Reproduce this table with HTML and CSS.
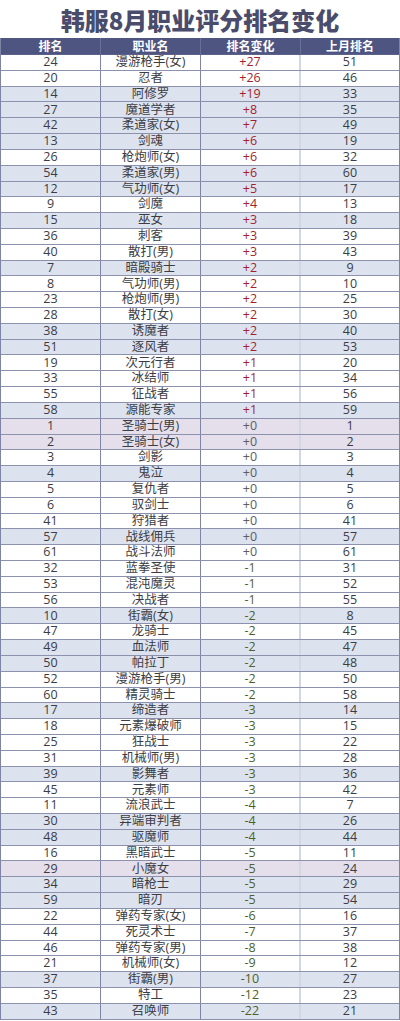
FILE: index.html
```html
<!DOCTYPE html>
<html lang="zh-CN">
<head>
<meta charset="utf-8">
<title>韩服8月职业评分排名变化</title>
<link rel="stylesheet" href="styles.css">
</head>
<body>
<div class="page">
  <h1 class="title">韩服8月职业评分排名变化</h1>
  <div class="table">
    <div class="row head"><div class="c">排名</div><div class="c">职业名</div><div class="c">排名变化</div><div class="c">上月排名</div></div>
    <div class="row w"><div class="c">24</div><div class="c">漫游枪手(女)</div><div class="c up">+27</div><div class="c">51</div></div>
    <div class="row w"><div class="c">20</div><div class="c">忍者</div><div class="c up">+26</div><div class="c">46</div></div>
    <div class="row b"><div class="c">14</div><div class="c">阿修罗</div><div class="c up">+19</div><div class="c">33</div></div>
    <div class="row b"><div class="c">27</div><div class="c">魔道学者</div><div class="c up">+8</div><div class="c">35</div></div>
    <div class="row b"><div class="c">42</div><div class="c">柔道家(女)</div><div class="c up">+7</div><div class="c">49</div></div>
    <div class="row b"><div class="c">13</div><div class="c">剑魂</div><div class="c up">+6</div><div class="c">19</div></div>
    <div class="row w"><div class="c">26</div><div class="c">枪炮师(女)</div><div class="c up">+6</div><div class="c">32</div></div>
    <div class="row b"><div class="c">54</div><div class="c">柔道家(男)</div><div class="c up">+6</div><div class="c">60</div></div>
    <div class="row b"><div class="c">12</div><div class="c">气功师(女)</div><div class="c up">+5</div><div class="c">17</div></div>
    <div class="row w"><div class="c">9</div><div class="c">剑魔</div><div class="c up">+4</div><div class="c">13</div></div>
    <div class="row b"><div class="c">15</div><div class="c">巫女</div><div class="c up">+3</div><div class="c">18</div></div>
    <div class="row w"><div class="c">36</div><div class="c">刺客</div><div class="c up">+3</div><div class="c">39</div></div>
    <div class="row w"><div class="c">40</div><div class="c">散打(男)</div><div class="c up">+3</div><div class="c">43</div></div>
    <div class="row b"><div class="c">7</div><div class="c">暗殿骑士</div><div class="c up">+2</div><div class="c">9</div></div>
    <div class="row w"><div class="c">8</div><div class="c">气功师(男)</div><div class="c up">+2</div><div class="c">10</div></div>
    <div class="row w"><div class="c">23</div><div class="c">枪炮师(男)</div><div class="c up">+2</div><div class="c">25</div></div>
    <div class="row w"><div class="c">28</div><div class="c">散打(女)</div><div class="c up">+2</div><div class="c">30</div></div>
    <div class="row b"><div class="c">38</div><div class="c">诱魔者</div><div class="c up">+2</div><div class="c">40</div></div>
    <div class="row b"><div class="c">51</div><div class="c">逐风者</div><div class="c up">+2</div><div class="c">53</div></div>
    <div class="row w"><div class="c">19</div><div class="c">次元行者</div><div class="c up">+1</div><div class="c">20</div></div>
    <div class="row w"><div class="c">33</div><div class="c">冰结师</div><div class="c up">+1</div><div class="c">34</div></div>
    <div class="row w"><div class="c">55</div><div class="c">征战者</div><div class="c up">+1</div><div class="c">56</div></div>
    <div class="row b"><div class="c">58</div><div class="c">源能专家</div><div class="c up">+1</div><div class="c">59</div></div>
    <div class="row p"><div class="c">1</div><div class="c">圣骑士(男)</div><div class="c zero">+0</div><div class="c">1</div></div>
    <div class="row p"><div class="c">2</div><div class="c">圣骑士(女)</div><div class="c zero">+0</div><div class="c">2</div></div>
    <div class="row w"><div class="c">3</div><div class="c">剑影</div><div class="c zero">+0</div><div class="c">3</div></div>
    <div class="row b"><div class="c">4</div><div class="c">鬼泣</div><div class="c zero">+0</div><div class="c">4</div></div>
    <div class="row w"><div class="c">5</div><div class="c">复仇者</div><div class="c zero">+0</div><div class="c">5</div></div>
    <div class="row w"><div class="c">6</div><div class="c">驭剑士</div><div class="c zero">+0</div><div class="c">6</div></div>
    <div class="row w"><div class="c">41</div><div class="c">狩猎者</div><div class="c zero">+0</div><div class="c">41</div></div>
    <div class="row b"><div class="c">57</div><div class="c">战线佣兵</div><div class="c zero">+0</div><div class="c">57</div></div>
    <div class="row w"><div class="c">61</div><div class="c">战斗法师</div><div class="c zero">+0</div><div class="c">61</div></div>
    <div class="row w"><div class="c">32</div><div class="c">蓝拳圣使</div><div class="c down">-1</div><div class="c">31</div></div>
    <div class="row w"><div class="c">53</div><div class="c">混沌魔灵</div><div class="c down">-1</div><div class="c">52</div></div>
    <div class="row w"><div class="c">56</div><div class="c">决战者</div><div class="c down">-1</div><div class="c">55</div></div>
    <div class="row b"><div class="c">10</div><div class="c">街霸(女)</div><div class="c down">-2</div><div class="c">8</div></div>
    <div class="row w"><div class="c">47</div><div class="c">龙骑士</div><div class="c down">-2</div><div class="c">45</div></div>
    <div class="row b"><div class="c">49</div><div class="c">血法师</div><div class="c down">-2</div><div class="c">47</div></div>
    <div class="row b"><div class="c">50</div><div class="c">帕拉丁</div><div class="c down">-2</div><div class="c">48</div></div>
    <div class="row w"><div class="c">52</div><div class="c">漫游枪手(男)</div><div class="c down">-2</div><div class="c">50</div></div>
    <div class="row w"><div class="c">60</div><div class="c">精灵骑士</div><div class="c down">-2</div><div class="c">58</div></div>
    <div class="row b"><div class="c">17</div><div class="c">缔造者</div><div class="c down">-3</div><div class="c">14</div></div>
    <div class="row w"><div class="c">18</div><div class="c">元素爆破师</div><div class="c down">-3</div><div class="c">15</div></div>
    <div class="row w"><div class="c">25</div><div class="c">狂战士</div><div class="c down">-3</div><div class="c">22</div></div>
    <div class="row w"><div class="c">31</div><div class="c">机械师(男)</div><div class="c down">-3</div><div class="c">28</div></div>
    <div class="row b"><div class="c">39</div><div class="c">影舞者</div><div class="c down">-3</div><div class="c">36</div></div>
    <div class="row w"><div class="c">45</div><div class="c">元素师</div><div class="c down">-3</div><div class="c">42</div></div>
    <div class="row w"><div class="c">11</div><div class="c">流浪武士</div><div class="c down">-4</div><div class="c">7</div></div>
    <div class="row b"><div class="c">30</div><div class="c">异端审判者</div><div class="c down">-4</div><div class="c">26</div></div>
    <div class="row b"><div class="c">48</div><div class="c">驱魔师</div><div class="c down">-4</div><div class="c">44</div></div>
    <div class="row w"><div class="c">16</div><div class="c">黑暗武士</div><div class="c down">-5</div><div class="c">11</div></div>
    <div class="row p"><div class="c">29</div><div class="c">小魔女</div><div class="c down">-5</div><div class="c">24</div></div>
    <div class="row b"><div class="c">34</div><div class="c">暗枪士</div><div class="c down">-5</div><div class="c">29</div></div>
    <div class="row b"><div class="c">59</div><div class="c">暗刃</div><div class="c down">-5</div><div class="c">54</div></div>
    <div class="row w"><div class="c">22</div><div class="c">弹药专家(女)</div><div class="c down">-6</div><div class="c">16</div></div>
    <div class="row w"><div class="c">44</div><div class="c">死灵术士</div><div class="c down">-7</div><div class="c">37</div></div>
    <div class="row w"><div class="c">46</div><div class="c">弹药专家(男)</div><div class="c down">-8</div><div class="c">38</div></div>
    <div class="row w"><div class="c">21</div><div class="c">机械师(女)</div><div class="c down">-9</div><div class="c">12</div></div>
    <div class="row b"><div class="c">37</div><div class="c">街霸(男)</div><div class="c down">-10</div><div class="c">27</div></div>
    <div class="row w"><div class="c">35</div><div class="c">特工</div><div class="c down">-12</div><div class="c">23</div></div>
    <div class="row b"><div class="c">43</div><div class="c">召唤师</div><div class="c down">-22</div><div class="c">21</div></div>
  </div>
</div>
</body>
</html>
```

FILE: styles.css
```css
html, body {
  margin: 0;
  padding: 0;
  background: #ffffff;
}

.page {
  width: 400px;
  font-family: "Open Sans", "Noto Sans CJK SC", sans-serif;
  color: #3c3c44;
}

.title {
  margin: 0;
  height: 38px;
  display: flex;
  align-items: center;
  justify-content: center;
  font-family: "Noto Sans CJK SC", sans-serif;
  font-weight: 900;
  font-size: 24px;
  color: #4a4c6c;
}

.table {
  border-left: 1px solid #7d84a6;
  border-right: 1px solid #7d84a6;
}

.row {
  display: grid;
  grid-template-columns: 100px 100px 100px 1fr;
  height: 15.82px;
  box-sizing: border-box;
  border-bottom: 1px solid #8c92ad;
  font-size: 12.5px;
}

.row .c {
  display: flex;
  align-items: center;
  justify-content: center;
  line-height: 1;
  border-right: 1px solid #7d84a6;
  box-sizing: border-box;
  white-space: nowrap;
}

.row .c:nth-child(3) {
  border-right: 2px solid #d3d7e4;
}

.row .c:last-child {
  border-right: none;
}

.head {
  height: 17px;
  background: #4e5581;
  border-bottom: 1px solid #5c638a;
  color: #ffffff;
  font-family: "Noto Sans CJK SC", sans-serif;
  font-weight: 700;
  font-size: 12px;
}

.head .c {
  padding-bottom: 1px;
}

.head .c,
.head .c:nth-child(3) {
  border-right: 1px solid #6a7096;
}

.head .c:last-child {
  border-right: none;
}

.w { background: #ffffff; }
.b { background: #dce3ef; }
.p { background: #e4dfeb; }

.up { color: #a31f2f; }
.zero { color: #5c5c64; }
.down { color: #4f5f26; }
```
